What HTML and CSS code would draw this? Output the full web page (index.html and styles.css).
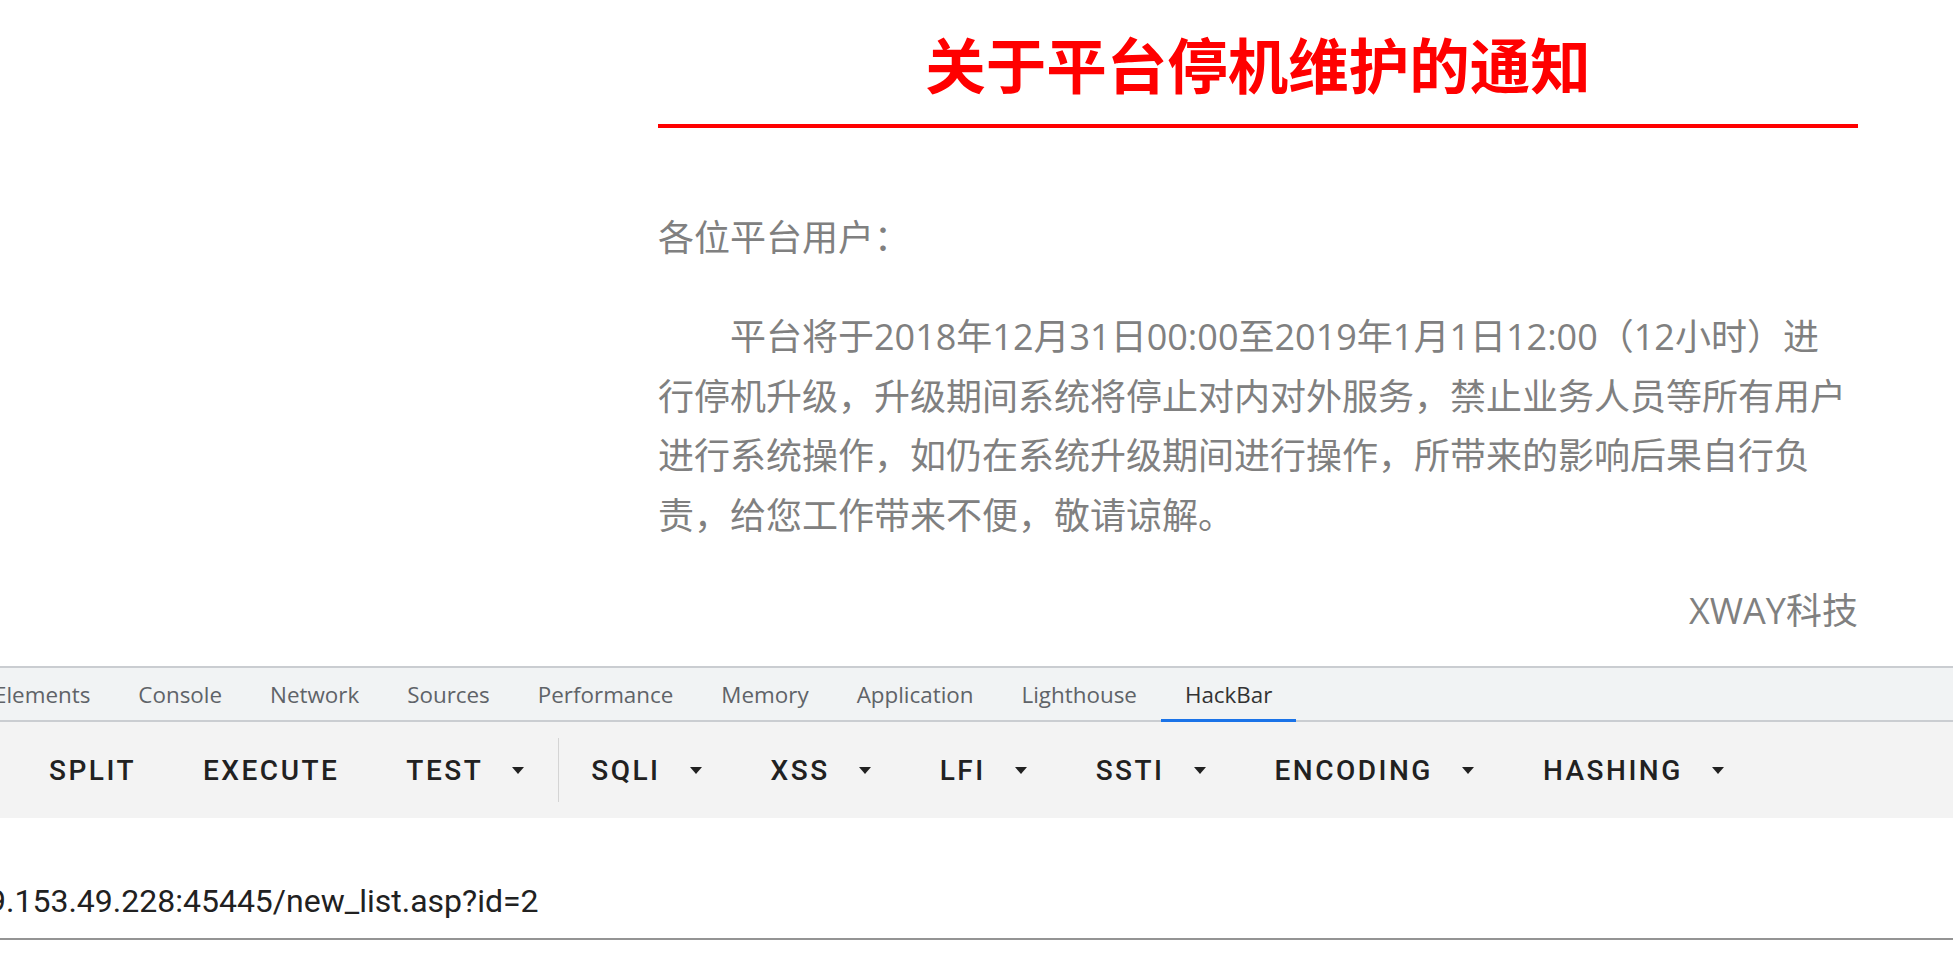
FILE: index.html
```html
<!DOCTYPE html>
<html lang="zh-CN">
<head>
<meta charset="utf-8">
<title>关于平台停机维护的通知</title>
<link rel="stylesheet" href="styles.css">
</head>
<body>
<div class="page">
  <div class="article">
    <h1 class="title">关于平台停机维护的通知</h1>
    <p class="greeting">各位平台用户：</p>
    <p class="body-text">平台将于2018年12月31日00:00至2019年1月1日12:00（12小时）进<br>行停机升级，升级期间系统将停止对内对外服务，禁止业务人员等所有用户进行系统操作，如仍在系统升级期间进行操作，所带来的影响后果自行负责，给您工作带来不便，敬请谅解。</p>
    <p class="signature">XWAY科技</p>
  </div>
</div>
<div class="devtools">
  <div class="tabs">
    <div class="tablist">
      <div class="tab">Elements</div>
      <div class="tab">Console</div>
      <div class="tab">Network</div>
      <div class="tab">Sources</div>
      <div class="tab">Performance</div>
      <div class="tab">Memory</div>
      <div class="tab">Application</div>
      <div class="tab">Lighthouse</div>
      <div class="tab active">HackBar</div>
    </div>
  </div>
  <div class="toolbar">
    <div class="btn">Split</div>
    <div class="btn">Execute</div>
    <div class="btn dd no-gap">Test<span class="caret"></span></div>
    <div class="divider"></div>
    <div class="btn dd">SQLi<span class="caret"></span></div>
    <div class="btn dd">XSS<span class="caret"></span></div>
    <div class="btn dd">LFI<span class="caret"></span></div>
    <div class="btn dd">SSTI<span class="caret"></span></div>
    <div class="btn dd">Encoding<span class="caret"></span></div>
    <div class="btn dd">Hashing<span class="caret"></span></div>
  </div>
  <div class="url-field"><span class="url-text">9.153.49.228:45445/new_list.asp?id=2</span></div>
</div>
</body>
</html>
```

FILE: styles.css
```css
html, body {
  margin: 0;
  padding: 0;
  background: #ffffff;
}

body {
  width: 1953px;
  height: 958px;
  overflow: hidden;
}

.page {
  height: 666px;
  padding-left: 658px;
  box-sizing: border-box;
  overflow: hidden;
}

.article {
  width: 1200px;
}

.title {
  margin: 16px 0 0;
  padding-bottom: 14px;
  border-bottom: 4px solid #ff0000;
  font-family: "Noto Sans CJK SC", sans-serif;
  font-weight: 700;
  font-size: 60.5px;
  line-height: 94px;
  color: #ff0000;
  text-align: center;
}

.greeting,
.body-text,
.signature {
  font-family: "Open Sans", "Noto Sans CJK SC", sans-serif;
  font-size: 36px;
  line-height: 59.4px;
  color: #808080;
}

.greeting {
  margin: 80px 0 40px;
}

.body-text {
  margin: 0 0 36px;
  text-indent: 2em;
}

.signature {
  margin: 0;
  text-align: right;
}

/* DevTools */
.devtools {
  background: #ffffff;
}

.tabs {
  height: 52px;
  border-top: 2px solid #cacdd1;
  border-bottom: 2px solid #cacdd1;
  background: #f1f3f4;
}

.tablist {
  display: flex;
  margin-left: -30px;
  height: 52px;
}

.tab {
  position: relative;
  padding: 1px 24px 0;
  height: 51px;
  line-height: 51px;
  font-family: "Open Sans", sans-serif;
  font-size: 22.4px;
  color: #5f6368;
  white-space: nowrap;
}

.tab.active {
  color: #333333;
}

.tab.active::after {
  content: "";
  position: absolute;
  left: 0;
  right: 0;
  bottom: -2px;
  height: 3px;
  background: #1a73e8;
}

.toolbar {
  display: flex;
  align-items: center;
  height: 96px;
  padding-left: 17px;
  background: #f3f3f3;
}

.btn {
  display: flex;
  align-items: center;
  height: 72px;
  padding: 0 32px;
  margin-right: 3px;
  font-family: Roboto, sans-serif;
  font-weight: 500;
  font-size: 28px;
  letter-spacing: 2.5px;
  text-transform: uppercase;
  color: #212121;
  white-space: nowrap;
}

.btn.dd {
  padding-right: 34px;
}

.btn.no-gap {
  margin-right: 0;
}

.caret {
  display: inline-block;
  width: 0;
  height: 0;
  margin-left: 29px;
  border-left: 6.5px solid transparent;
  border-right: 6.5px solid transparent;
  border-top: 7px solid #212121;
}

.divider {
  width: 1px;
  height: 64px;
  background: #d4d4d4;
}

.url-field {
  padding: 59px 0 13px;
  border-bottom: 2px solid #949494;
  font-family: Roboto, sans-serif;
  font-size: 32px;
  line-height: 48px;
  color: #212121;
  white-space: nowrap;
  overflow: hidden;
}

.url-text {
  display: inline-block;
  margin-left: -12px;
}
```
